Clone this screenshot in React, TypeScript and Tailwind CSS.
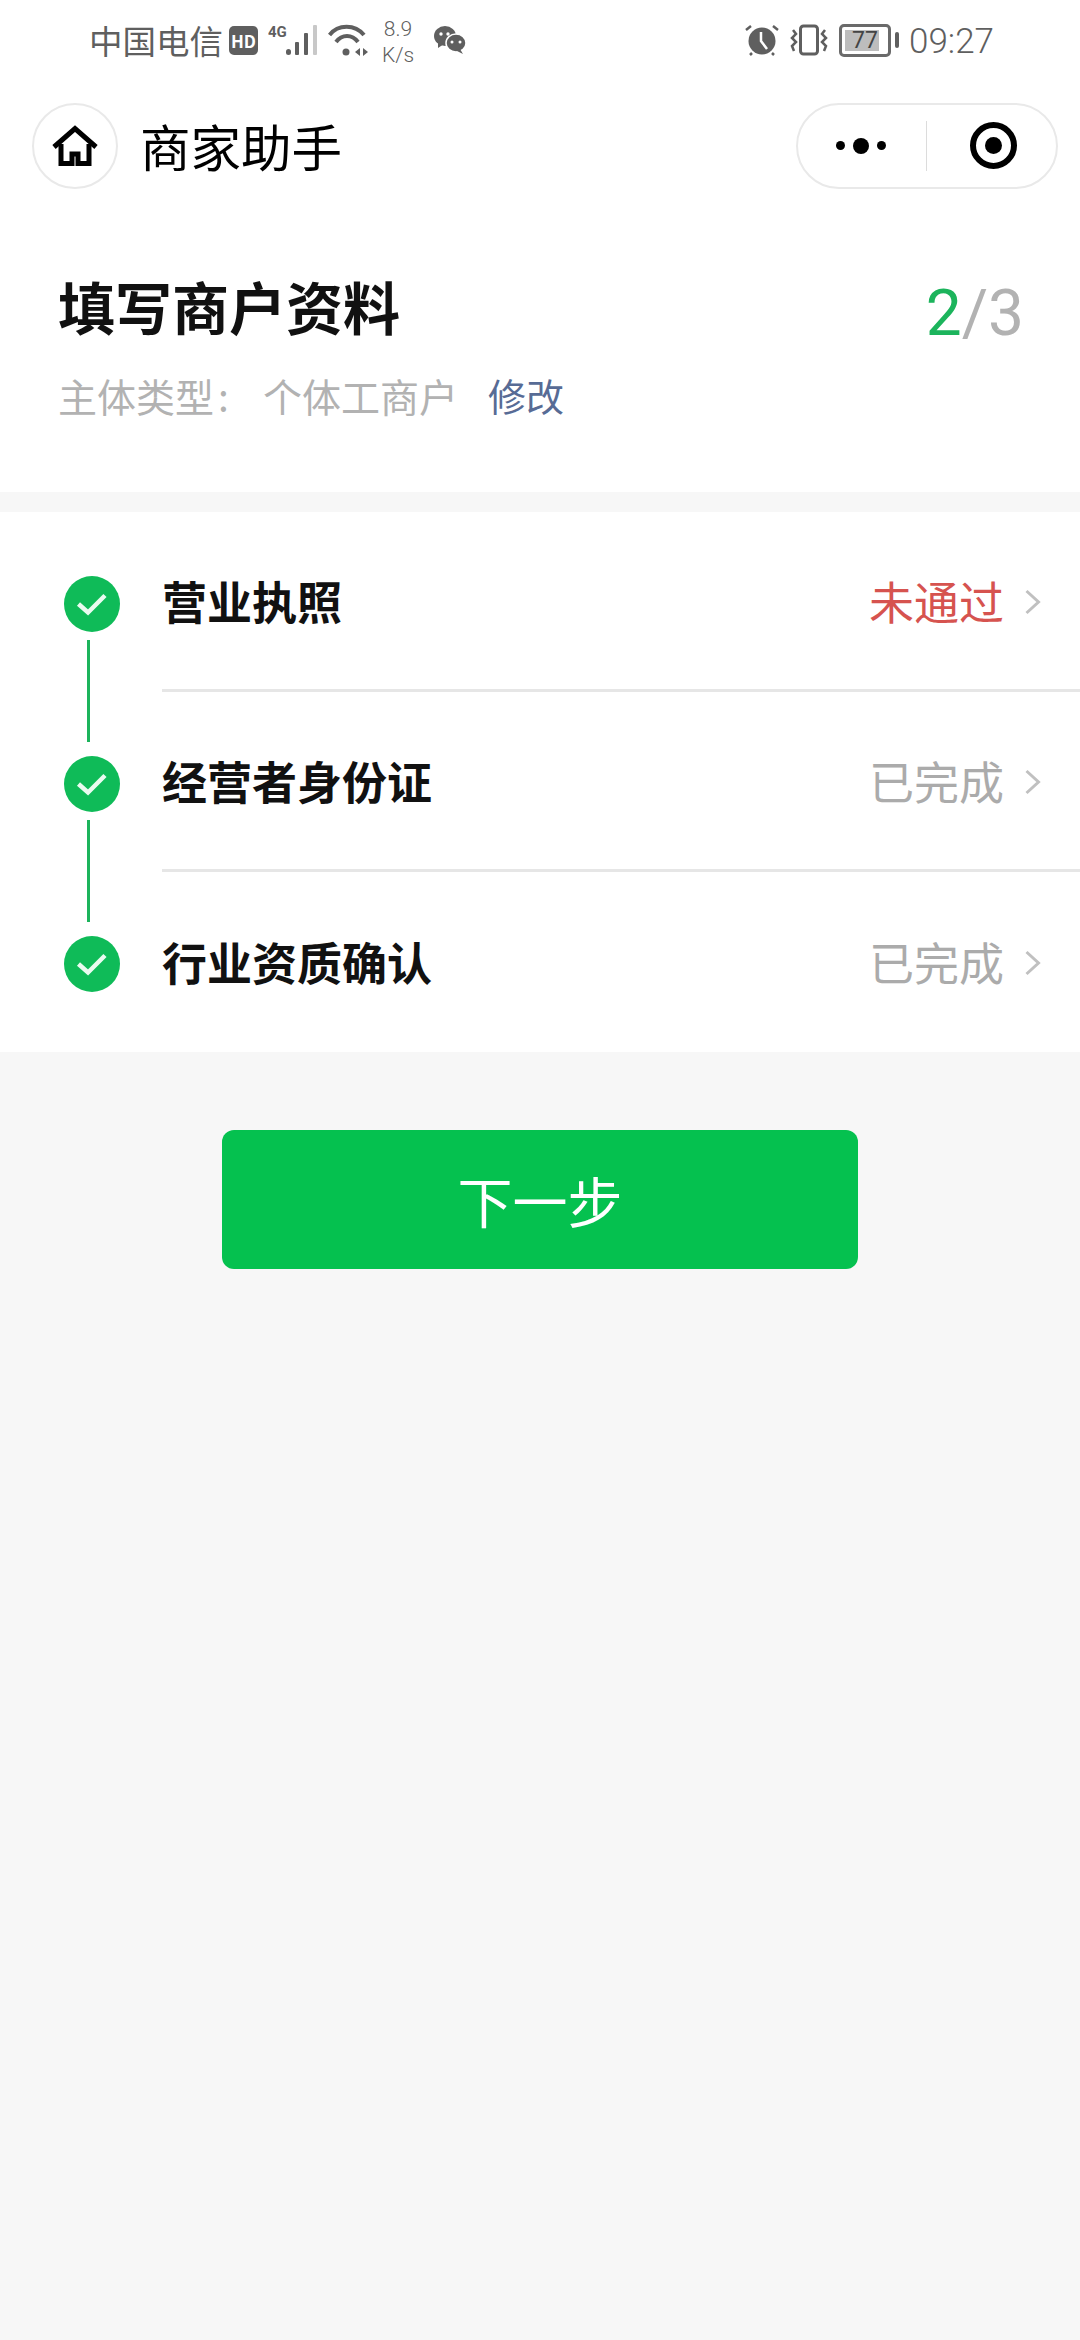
const cjk = "font-['Noto_Sans_CJK_SC','Noto_Sans',sans-serif]"

function Check() {
  return (
    <div className="relative z-10 flex h-[56px] w-[56px] items-center justify-center rounded-full bg-[#0fbb58]">
      <svg width="32" height="24" viewBox="0 0 32 24" fill="none">
        <path d="M2.5 12 L12 20.5 L29 3.5" stroke="#eafbf0" strokeWidth="4.5" />
      </svg>
    </div>
  )
}

function Chevron() {
  return (
    <svg width="18" height="28" viewBox="0 0 18 28" fill="none" className="ml-[20px] mt-[2px]">
      <path d="M2.5 3 L14.5 14 L2.5 25" stroke="#c0c0c0" strokeWidth="3" />
    </svg>
  )
}

function StepRow({ title, status, red, last }: { title: string; status: string; red?: boolean; last?: boolean }) {
  return (
    <div className="relative h-[180px] pl-[162px]">
      <div className={`flex h-full items-center pr-[38px] ${last ? '' : 'border-b-[3px] border-[#e6e6e6]'}`}>
        <span className="flex-1 text-[45px] font-bold text-[#111]">{title}</span>
        <span className={`text-[45px] ${red ? 'text-[#d6534f]' : 'text-[#ababab]'}`}>{status}</span>
        <Chevron />
      </div>
      <div className="absolute left-[64px] top-[64px]">
        <Check />
      </div>
      {!last && <div className="absolute left-[87px] top-[128px] h-[102px] w-[3px] bg-[#1cb45c]" />}
    </div>
  )
}

export default function App() {
  return (
    <div className={`flex h-[2340px] w-[1080px] flex-col overflow-hidden bg-[#f7f7f7] ${cjk}`}>
      {/* status bar */}
      <div className="flex h-[80px] items-center bg-white pl-[89px] pr-[86px] text-[#5f5f5f]">
        <span className="text-[33.5px] leading-[44px]">中国电信</span>
        <div className="ml-[6px] flex h-[29px] w-[29px] items-center justify-center rounded-[5px] bg-[#5f5f5f] text-[17px] font-bold leading-none text-white">HD</div>
        <svg width="52" height="36" viewBox="0 0 52 36" className="ml-[10px]">
          <text x="0" y="15" fontSize="15" fontWeight="700" fill="#5f5f5f" fontFamily="Roboto">4G</text>
          <rect x="18" y="27" width="5" height="6" rx="2.5" fill="#5f5f5f" />
          <rect x="27" y="20" width="4" height="13" rx="1" fill="#5f5f5f" />
          <rect x="36" y="11" width="4" height="22" rx="1" fill="#5f5f5f" />
          <rect x="45" y="3" width="4" height="30" rx="1" fill="#c8c8c8" />
        </svg>
        <svg width="42" height="34" viewBox="0 0 42 34" fill="none" className="ml-[8px]">
          <path d="M1.5 12 C10 1 27 1 36 12" stroke="#5f5f5f" strokeWidth="4" />
          <path d="M8 19 C14 11 24 11 30 19" stroke="#5f5f5f" strokeWidth="4" />
          <circle cx="18" cy="29" r="3.5" fill="#5f5f5f" />
          <path d="M32 25 L27 29 L32 33 Z M35 33 L40 29 L35 25 Z" fill="#5f5f5f" />
        </svg>
        <div className="ml-[9px] mt-[3px] flex w-[38px] flex-col items-center font-['Roboto',sans-serif] text-[21px] font-light leading-[26px]">
          <span>8.9</span>
          <span>K/s</span>
        </div>
        <svg width="34" height="30" viewBox="0 0 34 30" className="ml-[16px]">
          <ellipse cx="12" cy="11" rx="11" ry="10" fill="#5f5f5f" />
          <path d="M5 17 L5 23 L11 19 Z" fill="#5f5f5f" />
          <ellipse cx="23" cy="18" rx="10" ry="9" fill="#5f5f5f" stroke="#fff" strokeWidth="1.5" />
          <path d="M27 24 L30 29 L22 25 Z" fill="#5f5f5f" />
          <circle cx="8" cy="9" r="1.7" fill="#fff" />
          <circle cx="15" cy="9" r="1.7" fill="#fff" />
          <circle cx="19" cy="17" r="1.5" fill="#fff" />
          <circle cx="27" cy="17" r="1.5" fill="#fff" />
        </svg>
        <div className="flex-1" />
        <svg width="36" height="32" viewBox="0 0 34 32" fill="none">
          <circle cx="17" cy="17" r="13.5" fill="#5f5f5f" />
          <path d="M16 8 V17 L22 25" stroke="#fff" strokeWidth="2.5" />
          <path d="M1 6 L6 2 M33 6 L28 2" stroke="#5f5f5f" strokeWidth="2.5" />
          <path d="M7 29 L5 31 M27 29 L29 31" stroke="#5f5f5f" strokeWidth="2.5" />
        </svg>
        <svg width="40" height="32" viewBox="0 0 38 32" fill="none" className="ml-[9px]">
          <rect x="10.5" y="2" width="17" height="28" rx="3" stroke="#5f5f5f" strokeWidth="3" />
          <path d="M3 6 L6 10 L2 14 L6 18 L2 22 L4 27 M35 6 L32 10 L36 14 L32 18 L36 22 L34 27" stroke="#5f5f5f" strokeWidth="2.5" />
        </svg>
        <div className="relative ml-[10px] flex h-[33px] w-[52px] items-center rounded-[5px] border-[3px] border-[#6a6a6a] p-[3px]">
          <div className="h-full w-[34px] bg-[#bdbdbd]" />
          <span className="absolute inset-0 text-center font-['Roboto',sans-serif] text-[23px] leading-[27px] text-[#444]">77</span>
        </div>
        <div className="ml-[4px] h-[16px] w-[4px] rounded-sm bg-[#5f5f5f]" />
        <span className="ml-[10px] mt-[3px] font-['Roboto',sans-serif] text-[35px] font-light leading-[40px]">09:27</span>
      </div>

      {/* mini program nav */}
      <div className="flex h-[133px] items-center bg-white pb-[2px] pl-[32px] pr-[22px]">
        <div className="flex h-[86px] w-[86px] items-center justify-center rounded-full border-2 border-[#e9e9e9]">
          <svg width="46" height="42" viewBox="0 0 46 42" fill="none">
            <path d="M2 22 L23 3.5 L44 22" stroke="#000" strokeWidth="5" />
            <path d="M9 19 V38.5 H20 V29 H26 V38.5 H37 V19" stroke="#000" strokeWidth="5" />
          </svg>
        </div>
        <span className="ml-[22px] flex-1 text-[50.5px] text-black">商家助手</span>
        <div className="relative flex h-[86px] w-[262px] items-center rounded-full border-2 border-[#e9e9e9]">
          <div className="ml-[38px] flex items-center gap-[8px]">
            <div className="h-[9px] w-[9px] rounded-full bg-black" />
            <div className="h-[16px] w-[16px] rounded-full bg-black" />
            <div className="h-[9px] w-[9px] rounded-full bg-black" />
          </div>
          <div className="ml-[40px] h-[50px] w-px bg-[#dcdcdc]" />
          <div className="ml-[43px] flex h-[47px] w-[47px] items-center justify-center rounded-full border-[6px] border-black">
            <div className="h-[17px] w-[17px] rounded-full bg-black" />
          </div>
        </div>
      </div>

      {/* page heading */}
      <div className="-mt-px flex h-[280px] items-start justify-between bg-white pl-[58px] pr-[56px] pt-[53px]">
        <div>
          <h1 className="text-[57px] font-bold leading-[80px] text-[#111]">填写商户资料</h1>
          <div className="mt-[20px] flex items-center text-[39px] leading-[60px] text-[#b2b2b2]">
            <span className="w-[205px]">主体类型<span className="ml-[4px]">:</span></span>
            <span>个体工商户</span>
            <span className="ml-[30px] text-[38px] text-[#576b95]">修改</span>
          </div>
        </div>
        <div className="mt-[9px] font-['Roboto',sans-serif] text-[64px] leading-[80px] text-[#b2b2b2]">
          <span className="text-[#1cb45c]">2</span>/3
        </div>
      </div>

      {/* step list */}
      <div className="mt-[20px] bg-white">
        <StepRow title="营业执照" status="未通过" red />
        <StepRow title="经营者身份证" status="已完成" />
        <StepRow title="行业资质确认" status="已完成" last />
      </div>

      <button className="mx-auto mt-[78px] h-[139px] w-[636px] rounded-[12px] bg-[#05c14f] text-[55px] text-white">下一步</button>
    </div>
  )
}
